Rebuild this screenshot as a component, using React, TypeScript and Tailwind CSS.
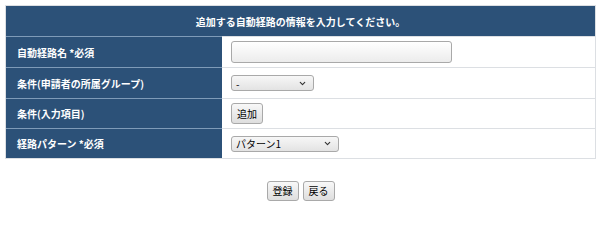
import { ChevronDown } from "lucide-react";

const font = { fontFamily: '"Noto Sans CJK JP", "Noto Sans", sans-serif' };

function Row({ label, h, children }: { label: string; h: string; children: React.ReactNode }) {
  return (
    <div className={`flex ${h} border-t border-[#dcdfe3]`}>
      <div className="w-[216px] shrink-0 bg-[#2c5178] border-t border-[#7f9bb8] -mt-px flex items-center pl-[11px] text-[10px] font-bold text-white">
        {label}
      </div>
      <div className="flex-1 bg-white flex items-center pl-[9px]">{children}</div>
    </div>
  );
}

function FakeSelect({ value, width }: { value: string; width: string }) {
  return (
    <div
      className={`${width} h-[16px] rounded-[3px] border border-[#a9a9a9] bg-gradient-to-b from-[#f7f7f7] to-[#e3e3e3] flex items-center justify-between pl-[4px] pr-[6px] text-[10px] text-black`}
    >
      <span>{value}</span>
      <ChevronDown className="w-[9px] h-[9px] text-[#333]" strokeWidth={3} />
    </div>
  );
}

function Btn({ label, h }: { label: string; h: string }) {
  return (
    <button className={`${h} w-[32px] rounded-[3px] border border-[#a9a9a9] bg-gradient-to-b from-[#f8f8f8] to-[#dedede] text-[10px] text-black leading-none`}>
      {label}
    </button>
  );
}

export default function App() {
  return (
    <div className="bg-white p-[5px] w-[600px]" style={font}>
      <div className="w-[591px] border border-[#dcdfe3]">
        <div className="h-[30px] bg-[#2c5178] flex items-center justify-center text-[10px] font-bold text-white">
          追加する自動経路の情報を入力してください。
        </div>
        <Row label="自動経路名 *必須" h="h-[31px]">
          <div className="w-[221px] h-[22px] rounded-[3px] border border-[#a9a9a9] bg-gradient-to-b from-[#ffffff] to-[#ececec]" />
        </Row>
        <Row label="条件(申請者の所属グループ)" h="h-[31px]">
          <FakeSelect value="-" width="w-[83px]" />
        </Row>
        <Row label="条件(入力項目)" h="h-[30px]">
          <Btn label="追加" h="h-[21px]" />
        </Row>
        <Row label="経路パターン *必須" h="h-[30px]">
          <FakeSelect value="パターン1" width="w-[108px]" />
        </Row>
      </div>
      <div className="w-[591px] flex justify-center gap-[4px] mt-[22px]">
        <Btn label="登録" h="h-[20px]" />
        <Btn label="戻る" h="h-[20px]" />
      </div>
    </div>
  );
}
